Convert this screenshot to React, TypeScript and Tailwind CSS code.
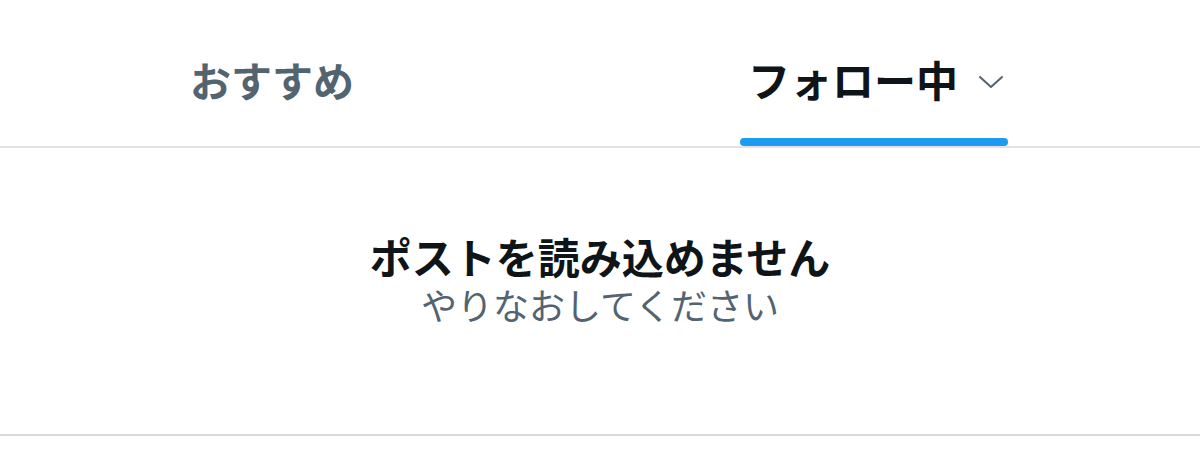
export default function App() {
  return (
    <div className="w-[1200px] h-[459px] bg-white overflow-hidden font-['Noto_Sans_CJK_JP',sans-serif]">
      <div className="grid grid-cols-[544px_656px] h-[148px] border-b-2 border-[#dfe3e6]">
        <div className="flex items-center justify-center">
          <span className="text-[41px] font-bold text-[#536471] leading-none mt-[12px]">おすすめ</span>
        </div>
        <div className="relative flex items-center justify-center">
          <div className="flex items-center gap-[20px] mt-[12px] ml-[8px]">
            <span className="text-[42px] font-bold text-[#0f1419] leading-none">フォロー中</span>
            <svg width="26" height="16" viewBox="0 0 26 16" className="mt-[6px]">
              <path d="M2 3 L13 13 L24 3" fill="none" stroke="#536471" strokeWidth="2" strokeLinecap="round" strokeLinejoin="round" />
            </svg>
          </div>
          <div className="absolute bottom-0 left-[196px] w-[268px] h-[8px] rounded-full bg-[#1d9bf0]" />
        </div>
      </div>
      <div className="h-[288px] border-b-2 border-[#d9d9d9] flex flex-col items-center justify-center gap-[2px] pb-[24px]">
        <p className="text-[42px] font-bold text-[#0f1419] leading-[48px]">ポストを読み込めません</p>
        <p className="text-[36px] text-[#536471] leading-[44px]">やりなおしてください</p>
      </div>
    </div>
  );
}
